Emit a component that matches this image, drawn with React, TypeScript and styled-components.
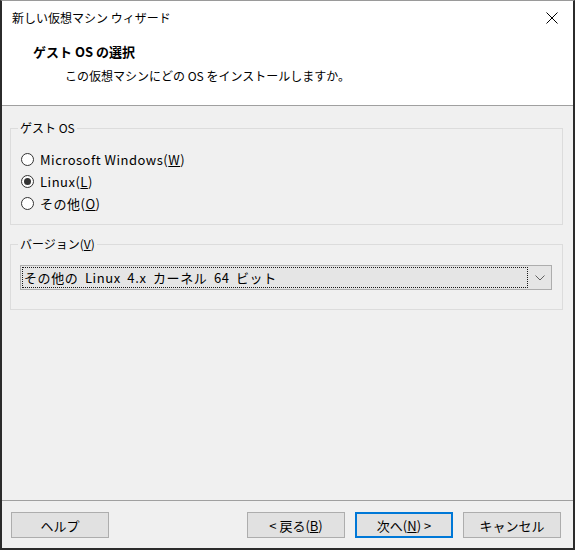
import styled, { createGlobalStyle } from "styled-components"

const Global = createGlobalStyle`
    html, body {
        margin: 0;
        padding: 0;
        background: #ffffff;
    }
    * {
        box-sizing: border-box;
    }
    body {
        font-family: "Noto Sans CJK JP", "Noto Sans", sans-serif;
        font-size: 12px;
        color: #000000;
    }
`

interface OsOption {
    label: string
    key: string
    checked?: boolean
}

const osOptions: OsOption[] = [
    { label: "Microsoft Windows", key: "W" },
    { label: "Linux", key: "L", checked: true },
    { label: "その他", key: "O" },
]

function Mnemonic({ label, k }: { label: string; k: string }) {
    return (
        <>
            {label}(<u>{k}</u>)
        </>
    )
}

export default function App() {
    return (
        <>
            <Global />
            <Window>
                <Header>
                    <TitleBar>
                        <span>新しい仮想マシン ウィザード</span>
                        <CloseButton aria-label="閉じる">
                            <svg width="12" height="12" viewBox="0 0 12 12">
                                <path d="M0.5 0.5 L11.5 11.5 M11.5 0.5 L0.5 11.5" stroke="#000" strokeWidth="1" fill="none" />
                            </svg>
                        </CloseButton>
                    </TitleBar>
                    <Heading>ゲスト OS の選択</Heading>
                    <SubTitle>この仮想マシンにどの OS をインストールしますか。</SubTitle>
                </Header>

                <Body>
                    <Group $padBottom={10}>
                        <Legend>ゲスト OS</Legend>
                        <RadioList>
                            {osOptions.map(opt => (
                                <RadioRow key={opt.key}>
                                    <RadioCircle $checked={opt.checked} />
                                    <RadioText>
                                        <Mnemonic label={opt.label} k={opt.key} />
                                    </RadioText>
                                </RadioRow>
                            ))}
                        </RadioList>
                    </Group>

                    <Group $padBottom={19} $gapTop={11}>
                        <Legend>
                            <Mnemonic label="バージョン" k="V" />
                        </Legend>
                        <Combo>
                            <ComboValue>その他の Linux 4.x カーネル 64 ビット</ComboValue>
                            <ComboArrow>
                                <svg width="10" height="6" viewBox="0 0 10 6">
                                    <path d="M0.5 0.5 L5 5 L9.5 0.5" stroke="#606060" strokeWidth="1" fill="none" />
                                </svg>
                            </ComboArrow>
                        </Combo>
                    </Group>
                </Body>

                <Footer>
                    <Button>ヘルプ</Button>
                    <ButtonGroup>
                        <Button>
                            &lt; <Mnemonic label="戻る" k="B" />
                        </Button>
                        <Button $primary>
                            <Mnemonic label="次へ" k="N" /> &gt;
                        </Button>
                        <Button>キャンセル</Button>
                    </ButtonGroup>
                </Footer>
            </Window>
        </>
    )
}

const Window = styled.div`
    width: 575px;
    height: 550px;
    display: flex;
    flex-direction: column;
    background: #f0f0f0;
    border: 2px solid #2b2b2b;
    border-top: 1px solid #9a9a9a;
`

const Header = styled.header`
    height: 105px;
    background: #ffffff;
    border-bottom: 1px solid #a0a0a0;
    display: flex;
    flex-direction: column;
`

const TitleBar = styled.div`
    height: 34px;
    display: flex;
    align-items: center;
    justify-content: space-between;
    padding: 0 15px 0 10px;
    font-size: 12px;
    line-height: 16px;
`

const CloseButton = styled.span`
    display: flex;
    align-items: center;
    justify-content: center;
`

const Heading = styled.div`
    margin-top: 8px;
    padding-left: 31px;
    font-size: 13px;
    line-height: 18px;
    font-weight: 700;
`

const SubTitle = styled.div`
    margin-top: 6px;
    padding-left: 63px;
    font-size: 12px;
    line-height: 18px;
`

const Body = styled.main`
    flex: 1;
    padding: 14px 10px 0 8px;
    display: flex;
    flex-direction: column;
`

const Group = styled.fieldset<{ $padBottom: number; $gapTop?: number }>`
    margin: ${p => p.$gapTop ?? 0}px 0 0 0;
    padding: 0 7px ${p => p.$padBottom}px 7px;
    border: 1px solid #dcdcdc;
    min-width: 0;
`

const Legend = styled.legend`
    padding: 0 2px;
    font-size: 12px;
    line-height: 16px;
`

const RadioList = styled.div`
    margin-top: 12px;
    display: flex;
    flex-direction: column;
`

const RadioRow = styled.label`
    height: 22px;
    display: flex;
    align-items: center;
    gap: 6px;
    padding-left: 3px;
`

const RadioText = styled.span`
    font-size: 13px;
    letter-spacing: 0.5px;
`

const RadioCircle = styled.span<{ $checked?: boolean }>`
    width: 13px;
    height: 13px;
    border-radius: 50%;
    border: 1px solid #333333;
    background: #ffffff;
    display: flex;
    align-items: center;
    justify-content: center;

    &::after {
        content: "";
        width: 7px;
        height: 7px;
        border-radius: 50%;
        background: ${p => (p.$checked ? "#333333" : "transparent")};
    }
`

const Combo = styled.div`
    margin: 13px 3px 0 2px;
    height: 25px;
    display: flex;
    align-items: stretch;
    background: #e5e5e5;
    border: 1px solid #adadad;
`

const ComboValue = styled.div`
    flex: 1;
    margin: 1px 0 1px 1px;
    padding-left: 1px;
    border: 1px dotted #1a1a1a;
    display: flex;
    align-items: center;
    font-size: 13px;
    letter-spacing: 0.6px;
    word-spacing: 3px;
`

const ComboArrow = styled.div`
    width: 23px;
    display: flex;
    align-items: center;
    justify-content: center;
`

const Footer = styled.footer`
    border-top: 1px solid #a0a0a0;
    padding: 11px 12px 10px 9px;
    display: flex;
    justify-content: space-between;
`

const ButtonGroup = styled.div`
    display: flex;
    gap: 10px;
`

const Button = styled.button<{ $primary?: boolean }>`
    width: 98px;
    height: 26px;
    margin: 0;
    padding: 0;
    font-family: inherit;
    font-size: 13px;
    color: #000000;
    background: #e1e1e1;
    border: 1px solid ${p => (p.$primary ? "#0078d7" : "#adadad")};
    box-shadow: ${p => (p.$primary ? "inset 0 0 0 1px #0078d7" : "none")};
`
